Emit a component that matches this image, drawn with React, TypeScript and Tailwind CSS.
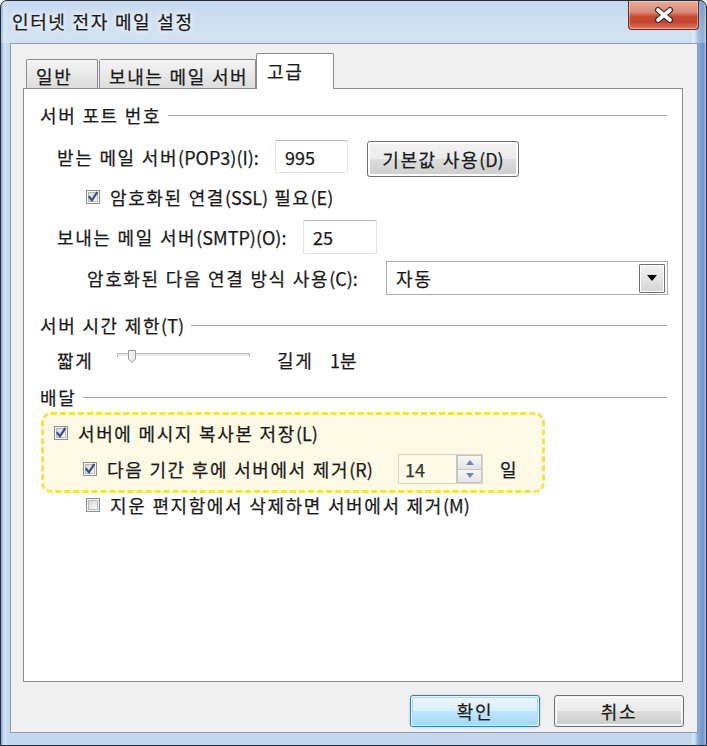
import React from "react";

function T({ children }: { children: string }) {
  const parts = children.split(/([\uAC00-\uD7A3]+)/);
  return (
    <span className="whitespace-pre">
      {parts.map((p, i) =>
        /[\uAC00-\uD7A3]/.test(p) ? (
          <span key={i} className="tracking-[1.6px]">
            {p}
          </span>
        ) : (
          <React.Fragment key={i}>{p}</React.Fragment>
        )
      )}
    </span>
  );
}

function Check({ checked }: { checked?: boolean }) {
  return (
    <span className="relative shrink-0 w-[14px] h-[14px] border border-[#8e8f8f] bg-[#f4f4f4] flex items-center justify-center">
      <span className="w-[10px] h-[10px] border border-[#b7b7b7] bg-gradient-to-br from-[#d6d6d6] to-[#fbfbfb]" />
      {checked && (
        <svg className="absolute left-0 top-0" width="12" height="12" viewBox="0 0 12 12">
          <path d="M2.3 5.8 L4.9 9.3 L9.9 1.6" stroke="#3a4c8a" strokeWidth="2.2" fill="none" strokeLinecap="round" strokeLinejoin="round" />
        </svg>
      )}
    </span>
  );
}

function Header({ text, className }: { text: string; className: string }) {
  return (
    <div className={"flex items-center h-[20px] " + className}>
      <T>{text}</T>
      <span className="flex-1 ml-[7px] h-px bg-[#a8a8a8]" />
    </div>
  );
}

function TextBox({ value, className }: { value: string; className: string }) {
  return (
    <div
      className={
        "shrink-0 flex items-center pl-[9px] bg-white border border-[#dfe3ea] border-t-[#b5b8be] rounded-[2px] " + className
      }
    >
      {value}
    </div>
  );
}

function Slider() {
  return (
    <svg width="133" height="20" viewBox="0 0 133 20" className="shrink-0 -translate-y-[4px]">
      <rect x="0.5" y="7.5" width="132" height="3" fill="#e6e8ea" stroke="#b9bcc0" />
      <line x1="1" y1="10.5" x2="132" y2="10.5" stroke="#ffffff" />
      <path d="M11.5 4.5 H18.5 V13 L15 16.5 L11.5 13 Z" fill="#eeeeee" stroke="#9a9a9a" />
      <line x1="13" y1="6" x2="13" y2="13" stroke="#ffffff" />
    </svg>
  );
}

export default function App() {
  return (
    <div className="w-[707px] h-[746px] overflow-hidden bg-white">
      <div className="relative w-[707px] h-[746px] border border-[#262c35] rounded-t-[7px] bg-[linear-gradient(90deg,#7fa3d2_0px,#cfe1f5_3px,#c3d7ee_8px,#c3d7ee_690px,#d7e6f6_692px,#cbdcf0_694px,#86acdb_697px,#6f95c8_702px,#9dbde4_705px)] flex flex-col [font-family:'Noto_Sans_CJK_KR',sans-serif] text-[18px] [word-spacing:2px] leading-none text-[#1a1a1a] [-webkit-text-stroke:0.25px_#1a1a1a]">
        {/* title bar */}
        <div className="h-[42px] shrink-0 flex items-center pl-[11px] bg-gradient-to-b from-[#ffffff10] via-[#ffffff30] to-[#ffffff40] rounded-t-[6px]">
          <span className="[text-shadow:0_0_6px_#ffffff,0_0_10px_#ffffff] -translate-y-[1px]">
            <T>인터넷 전자 메일 설정</T>
          </span>
        </div>
        <div className="absolute top-0 right-[7px] w-[71px] h-[29px] rounded-b-[4px] border border-t-0 border-[#6b2a22] bg-[linear-gradient(#eaa999_0%,#dc8a76_40%,#c84a34_55%,#c5442e_75%,#de7b5f_100%)] flex items-center justify-center shadow-[inset_0_0_0_1px_rgba(255,255,255,0.35)]">
          <svg width="22" height="16" viewBox="0 0 22 16">
            <path d="M5 3 L17 13 M17 3 L5 13" stroke="#3a2a2a" strokeWidth="6" strokeLinecap="round" />
            <path d="M5 3 L17 13 M17 3 L5 13" stroke="#ffffff" strokeWidth="3.6" strokeLinecap="round" />
          </svg>
        </div>

        {/* client area */}
        <div className="ml-[9px] mr-[8px] h-[690px] shrink-0 bg-[#f0f0f0] border border-[#8d9cb0] flex flex-col pl-[12px] pt-[9px]">
          {/* tabs */}
          <div className="h-[35px] flex items-end ml-[3px] shrink-0">
            <div className="w-[72px] h-[29px] border border-b-0 border-[#898c95] rounded-t-[2px] bg-gradient-to-b from-[#f4f4f4] via-[#e9e9e9] to-[#dcdcdc] pl-[9px] pt-[7px]">
              <T>일반</T>
            </div>
            <div className="ml-[1px] w-[157px] h-[29px] border border-b-0 border-[#898c95] rounded-t-[2px] bg-gradient-to-b from-[#f4f4f4] via-[#e9e9e9] to-[#dcdcdc] pl-[9px] pt-[7px]">
              <T>보내는 메일 서버</T>
            </div>
            <div className="relative z-10 w-[78px] h-[36px] -mb-px border border-b-0 border-[#898c95] rounded-t-[2px] bg-white pl-[10px] pt-[8px]">
              <T>고급</T>
            </div>
          </div>

          {/* panel */}
          <div className="w-[660px] h-[594px] shrink-0 bg-white border border-[#898c95] flex flex-col pl-[16px] pr-[15px]">
            <Header text="서버 포트 번호" className="mt-[16px]" />

            <div className="mt-[15px] flex items-start pl-[17px] h-[37px]">
              <div className="w-[218px] h-[33px] flex items-center shrink-0">
                <T>받는 메일 서버(POP3)(I):</T>
              </div>
              <TextBox value="995" className="w-[73px] h-[33px]" />
              <div className="ml-[19px] mt-[1px] w-[152px] h-[36px] shrink-0 rounded-[3px] border border-[#707070] p-px">
                <div className="w-full h-full rounded-[2px] border border-[#fcfcfc] bg-[linear-gradient(#f2f2f2_0%,#ebebeb_50%,#dddddd_50%,#cfcfcf_100%)] flex items-center justify-center">
                  <T>기본값 사용(D)</T>
                </div>
              </div>
            </div>

            <div className="mt-[10px] h-[20px] flex items-center pl-[46px]">
              <Check checked />
              <span className="ml-[10px]">
                <T>암호화된 연결(SSL) 필요(E)</T>
              </span>
            </div>

            <div className="mt-[13px] h-[34px] flex items-center pl-[17px]">
              <div className="w-[246px] shrink-0">
                <T>보내는 메일 서버(SMTP)(O):</T>
              </div>
              <TextBox value="25" className="w-[74px] h-[34px]" />
            </div>

            <div className="mt-[7px] h-[34px] flex items-center pl-[47px]">
              <div className="w-[299px] shrink-0">
                <T>암호화된 다음 연결 방식 사용(C):</T>
              </div>
              <div className="w-[282px] h-[34px] shrink-0 bg-white border border-[#a9abaf] flex items-center pl-[9px] pr-[2px]">
                <span className="flex-1">
                  <T>자동</T>
                </span>
                <div className="w-[26px] h-[29px] border border-[#6f6f6f] rounded-[1px] bg-gradient-to-b from-[#f3f3f3] to-[#d5d5d5] flex items-center justify-center shadow-[inset_0_0_0_1px_#ffffff]">
                  <svg width="10" height="6" viewBox="0 0 10 6">
                    <path d="M0 0 H10 L5 6 Z" fill="#000000" />
                  </svg>
                </div>
              </div>
            </div>

            <Header text="서버 시간 제한(T)" className="mt-[20px]" />

            <div className="mt-[15px] h-[20px] flex items-center pl-[17px]">
              <span className="w-[60px] shrink-0">
                <T>짧게</T>
              </span>
              <Slider />
              <span className="ml-[27px] w-[53px] shrink-0">
                <T>길게</T>
              </span>
              <T>1분</T>
            </div>

            <Header text="배달" className="mt-[17px]" />

            <div className="mt-[5px] ml-[1px] w-[504px] h-[81px] shrink-0 rounded-[10px] border-[3px] border-dashed border-[#f6df55] bg-[#fcf9e4] flex flex-col">
              <div className="mt-[8px] h-[20px] flex items-center pl-[10px]">
                <Check checked />
                <span className="ml-[10px]">
                  <T>서버에 메시지 복사본 저장(L)</T>
                </span>
              </div>
              <div className="mt-[11px] h-[30px] flex items-center pl-[39px]">
                <Check checked />
                <span className="ml-[10px] w-[291px] shrink-0">
                  <T>다음 기간 후에 서버에서 제거(R)</T>
                </span>
                <div className="w-[85px] h-[30px] shrink-0 border border-[#d8d5c6] flex items-stretch">
                  <span className="flex-1 flex items-center pl-[6px] text-[#3a3a3a]">14</span>
                  <div className="w-[26px] flex flex-col border-l border-[#c9c7bd]">
                    <div className="flex-1 border border-[#c4c4c4] bg-gradient-to-b from-[#f7f7f7] to-[#e4e4e4] flex items-center justify-center">
                      <svg width="8" height="5" viewBox="0 0 8 5"><path d="M0 5 L4 0 L8 5 Z" fill="#7085b3" /></svg>
                    </div>
                    <div className="flex-1 border border-t-0 border-[#c4c4c4] bg-gradient-to-b from-[#f7f7f7] to-[#e4e4e4] flex items-center justify-center">
                      <svg width="8" height="5" viewBox="0 0 8 5"><path d="M0 0 L8 0 L4 5 Z" fill="#7085b3" /></svg>
                    </div>
                  </div>
                </div>
                <span className="ml-[17px]">
                  <T>일</T>
                </span>
              </div>
            </div>

            <div className="mt-[2px] h-[20px] flex items-center pl-[46px]">
              <Check />
              <span className="ml-[10px]">
                <T>지운 편지함에서 삭제하면 서버에서 제거(M)</T>
              </span>
            </div>
          </div>

          {/* buttons */}
          <div className="mt-[13px] h-[32px] flex justify-end pr-[13px] gap-[14px]">
            <div className="w-[130px] h-[32px] rounded-[3px] border border-[#3c7fb1] shadow-[0_0_2px_#6ec6f5] p-px">
              <div className="w-full h-full rounded-[2px] border border-[#9ee0ff] bg-[linear-gradient(#eaf6fd_0%,#d9f0fc_50%,#bee6fd_50%,#a7d9f5_100%)] flex items-center justify-center">
                <T>확인</T>
              </div>
            </div>
            <div className="w-[130px] h-[32px] rounded-[3px] border border-[#707070] p-px">
              <div className="w-full h-full rounded-[2px] border border-[#fcfcfc] bg-[linear-gradient(#f2f2f2_0%,#ebebeb_50%,#dddddd_50%,#cfcfcf_100%)] flex items-center justify-center">
                <T>취소</T>
              </div>
            </div>
          </div>
        </div>
      </div>
    </div>
  );
}
